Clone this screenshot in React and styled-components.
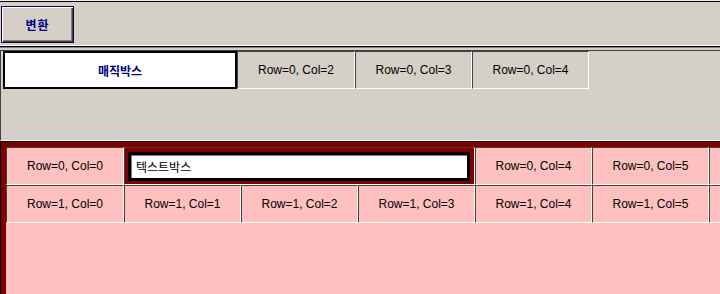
import React from 'react';
import styled, { createGlobalStyle } from 'styled-components';

const GlobalStyle = createGlobalStyle`
  html, body {
    margin: 0;
    padding: 0;
    background: #d4d0c8;
    overflow: hidden;
  }
  body {
    font-family: "Liberation Sans", "Noto Sans CJK KR", sans-serif;
    font-size: 12px;
  }
`;

const Page = styled.div`
  width: 720px;
  height: 294px;
  display: flex;
  flex-direction: column;
  overflow: hidden;
  background: #d4d0c8;
`;

const Toolbar = styled.div`
  height: 46px;
  box-sizing: border-box;
  flex-shrink: 0;
  border-top: 1px solid #f0f0f0;
  border-bottom: 1px solid #fff;
  box-shadow: inset 0 1px 0 #000;
  padding: 5px 0 0 1px;
`;

const Button = styled.button`
  width: 73px;
  height: 37px;
  box-sizing: border-box;
  padding: 0;
  border: 1px solid #0c0c40;
  background: #d4d0c8;
  box-shadow: inset 1px 1px 0 #fff, inset -1px -1px 0 #404040, inset -2px -2px 0 #808080;
  color: #000080;
  font-family: "Noto Sans CJK KR", sans-serif;
  font-weight: 700;
  font-size: 12px;
  letter-spacing: 1px;
`;

const Rule = styled.div`
  height: 2px;
  box-sizing: border-box;
  flex-shrink: 0;
  border-top: 1px solid #000;
  border-bottom: 1px solid #808080;
  margin-bottom: 2px;
`;

const UpperPanel = styled.div`
  height: 91px;
  box-sizing: border-box;
  flex-shrink: 0;
  border-top: 1px solid #404040;
  border-left: 1px solid #404040;
  border-bottom: 1px solid #fff;
  padding-left: 2px;
`;

const UpperGrid = styled.div`
  display: grid;
  grid-template-columns: 234px 118px 117px 117px;
  grid-auto-rows: 38px;
`;

const MagicBox = styled.div`
  box-sizing: border-box;
  border: 2px solid #000;
  background: #fff;
  color: #000080;
  font-family: "Noto Sans CJK KR", sans-serif;
  font-weight: 700;
  font-size: 12px;
  display: flex;
  align-items: center;
  justify-content: center;
`;

const Cell = styled.div`
  box-sizing: border-box;
  border-top: 1px solid #404040;
  border-left: 1px solid #404040;
  border-right: 1px solid #fff;
  border-bottom: 1px solid #fff;
  background: ${(p) => p.$bg};
  color: #000;
  font-size: 12px;
  white-space: nowrap;
  display: flex;
  align-items: center;
  justify-content: center;
  grid-column: span ${(p) => p.$span || 1};
`;

const Frame = styled.div`
  flex: 1;
  min-height: 0;
  display: flex;
  border-top: 1px solid #000;
  border-left: 1px solid #000;
  background: #800000;
  padding: 5px 0 0 5px;
  overflow: hidden;
`;

const Sheet = styled.div`
  flex: 1;
  background: #ffc0c0;
  display: grid;
  grid-template-columns: 118px repeat(6, 117px);
  grid-auto-rows: 38px;
  align-content: start;
`;

const TextCell = styled(Cell)`
  justify-content: stretch;
  align-items: stretch;
  padding: 4px 4px 3px 3px;
`;

const TextBox = styled.input`
  flex: 1;
  min-width: 0;
  box-sizing: border-box;
  border: 3px solid #000;
  box-shadow: inset 1px 1px 0 #808080;
  background: #fff;
  padding: 0 0 0 5px;
  font-family: "Noto Sans CJK KR", sans-serif;
  font-size: 12px;
  color: #000;
  outline: none;
`;

const PINK = '#ffc0c0';
const GRAY = '#d4d0c8';

const label = (r, c) => (c < 6 ? `Row=${r}, Col=${c}` : '');

export default function App() {
  return (
    <Page>
      <GlobalStyle />
      <Toolbar>
        <Button>변환</Button>
      </Toolbar>
      <Rule />
      <UpperPanel>
        <UpperGrid>
          <MagicBox>매직박스</MagicBox>
          {[2, 3, 4].map((c) => (
            <Cell key={c} $bg={GRAY}>{label(0, c)}</Cell>
          ))}
        </UpperGrid>
      </UpperPanel>
      <Frame>
        <Sheet>
          <Cell $bg={PINK}>{label(0, 0)}</Cell>
          <TextCell $bg="#800000" $span={3}>
            <TextBox readOnly value="텍스트박스" />
          </TextCell>
          {[4, 5, 6].map((c) => (
            <Cell key={c} $bg={PINK}>{label(0, c)}</Cell>
          ))}
          {[0, 1, 2, 3, 4, 5, 6].map((c) => (
            <Cell key={`r1-${c}`} $bg={PINK}>{label(1, c)}</Cell>
          ))}
        </Sheet>
      </Frame>
    </Page>
  );
}
